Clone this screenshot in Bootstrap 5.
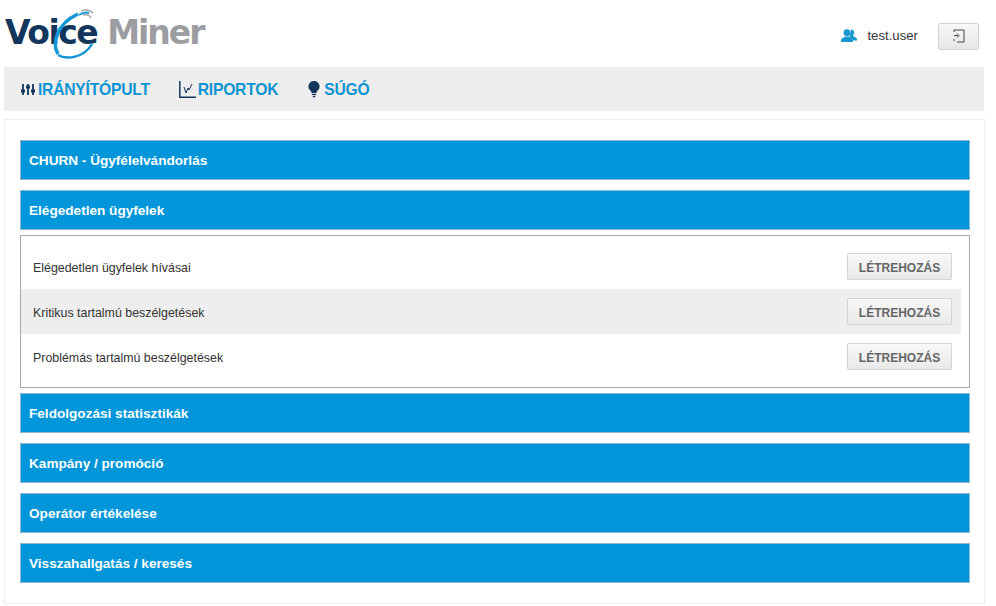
<!DOCTYPE html>
<html lang="hu"><head><meta charset="utf-8"><title>Voice Miner</title>
<link rel="stylesheet" href="https://cdn.jsdelivr.net/npm/bootstrap@5.3.0/dist/css/bootstrap.min.css">
<style>
html,body{height:606px;overflow:hidden}
body{font-family:"Liberation Sans",Arial,sans-serif;font-size:12px;color:#333;background:#fff}
.vm-page{padding:0 11px 0 4px}
.vm-top{height:67px;padding-right:6px}
.vm-logo{position:relative;width:205px;height:60px;margin-left:1px}
.vm-logo-text{position:absolute;left:0;top:9px;font-family:"DejaVu Sans",sans-serif;font-size:33px;line-height:40px;font-weight:700;letter-spacing:-1.500px;white-space:nowrap;color:#12365c}
.vm-logo-text b{color:#9b9da0;margin-left:10px;letter-spacing:-2px}
.vm-logo svg{position:absolute;left:45px;top:4px}
.vm-user{font-size:13.200px;color:#333;margin-right:20px;padding-top:5px}
.vm-user svg{margin-right:10px}
.vm-exit{width:41px;height:27px;padding:0;border:1px solid #d2d2d2;border-radius:2px;background:linear-gradient(#f8f8f8,#e6e6e6);margin-top:5px}
.vm-nav{background:#eee;height:44px;padding:1px 16px 0;gap:29px;width:980px}
.vm-nav a{color:#0f94d3;font-size:15.700px;font-weight:700;text-decoration:none;letter-spacing:-.25px;display:flex;align-items:center;gap:2px}
.vm-nav a:last-child{gap:3px}
.vm-panel{margin-top:8px;border:1px solid #eee;height:485px;padding:20px 15px 0 15px;width:981px}
.vm-head{background:#0096d9;border:1px solid #8fb7d0;height:40px;color:#fff;font-size:13.600px;font-weight:700;display:flex;align-items:center;padding:2px 0 0 8px;width:950px;border-radius:0;margin-bottom:10px}
.vm-head.vm-open{margin-bottom:5px}
.vm-body{border:1px solid #aaa7b0;height:153px;margin-bottom:5px;padding:8px 8px 0 0;width:950px}
.vm-row{height:45px;padding:0 9px 0 12px;font-size:12.400px;color:#333}
.vm-rowtext{padding-top:3px}
.vm-row.vm-alt{background:#eee}
.vm-create{width:105px;height:27px;padding:2px 0 0;border:1px solid #d5d5d5;border-radius:1px;background:linear-gradient(#f8f8f8,#e9e9e9);color:#666;font-size:12px;font-weight:700}
</style></head><body>
<div class="vm-page">
<div class="vm-top d-flex justify-content-between align-items-center">
 <div class="vm-logo">
  <span class="vm-logo-text">Voice<b>Miner</b></span>
  <svg width="50" height="52" viewBox="0 0 50 52" fill="none">
   <path d="M8 46C2 36 6 16 28 6" stroke="#1296d6" stroke-width="3.500"/>
   <path d="M8 47C16 52 34 50 42 36" stroke="#1296d6" stroke-width="2.500"/>
   <path d="M29 7C32 5 36 4 39 5" stroke="#1296d6" stroke-width="2"/>
   <path d="M31 3C35 1 40 2 43 5M33 7C36 6 40 7 41 10" stroke="#a9adb0" stroke-width="1.600"/>
  </svg>
 </div>
 <div class="d-flex align-items-center">
  <div class="vm-user d-flex align-items-center">
   <svg width="16" height="13" viewBox="0 0 16 13" fill="#1a96d2"><path d="M10 .5c2 0 3.500 1.500 3.200 3.500-.2 1-.7 2-1.500 2.700.2.500 4.300 1.300 4.300 3.800v1h-3.500C12 10 9.500 9 8.500 8.500L9 6z"/><circle cx="6" cy="3.700" r="3.400"/><path d="M0 13v-1.500C0 9 3.500 8.500 4 7.500h4c.5 1 4 1.500 4 4V13z"/></svg>
   test.user
  </div>
  <button class="btn vm-exit d-flex align-items-center justify-content-center" type="button" aria-label="Kilépés">
   <svg width="12" height="14" viewBox="0 0 12 14" fill="none" stroke="#444"><path d="M1 3V1h10v12H4"/><path d="M1 6.500h4M4 4.500l2 2-2 2M1 10v2"/></svg>
  </button>
 </div>
</div>
<nav class="vm-nav d-flex align-items-center">
 <a href="#"><svg width="16" height="13" viewBox="0 0 16 13" stroke="#12365c" fill="#12365c"><path d="M3 1v11M8 1v11M13 1v11" stroke-width="1.800"/><rect x="1.500" y="7" width="3" height="2"/><rect x="6.500" y="3" width="3" height="2"/><rect x="11.500" y="7" width="3" height="2"/></svg>IRÁNYÍTÓPULT</a>
 <a href="#"><svg width="17" height="17" viewBox="0 0 17 17" fill="none" stroke="#12365c"><path d="M.8 0v16.200H17" stroke-width="1.500"/><path d="M5 6l2 6 2-5 1 2 3-6" stroke-width="1"/></svg>RIPORTOK</a>
 <a href="#"><svg width="14" height="17" viewBox="0 0 14 17" fill="#12365c"><path d="M7 0a5.500 5.500 0 0 1 3.200 10c-.6.600-.8 1.200-.9 2H4.700c-.1-.8-.3-1.400-.9-2A5.500 5.500 0 0 1 7 0z"/><rect x="4.800" y="12.800" width="4.400" height="1.200"/><rect x="5.800" y="14.800" width="2.400" height="1.500"/></svg>SÚGÓ</a>
</nav>
<main class="vm-panel">
 <div class="vm-head">CHURN - Ügyfélelvándorlás</div>
 <div class="vm-head vm-open">Elégedetlen ügyfelek</div>
 <div class="vm-body">
  <div class="vm-row d-flex justify-content-between align-items-center"><span class="vm-rowtext">Elégedetlen ügyfelek hívásai</span><button class="btn vm-create" type="button">LÉTREHOZÁS</button></div>
  <div class="vm-row vm-alt d-flex justify-content-between align-items-center"><span class="vm-rowtext">Kritikus tartalmú beszélgetések</span><button class="btn vm-create" type="button">LÉTREHOZÁS</button></div>
  <div class="vm-row d-flex justify-content-between align-items-center"><span class="vm-rowtext">Problémás tartalmú beszélgetések</span><button class="btn vm-create" type="button">LÉTREHOZÁS</button></div>
 </div>
 <div class="vm-head">Feldolgozási statisztikák</div>
 <div class="vm-head">Kampány / promóció</div>
 <div class="vm-head">Operátor értékelése</div>
 <div class="vm-head">Visszahallgatás / keresés</div>
</main>
</div>
</body></html>
